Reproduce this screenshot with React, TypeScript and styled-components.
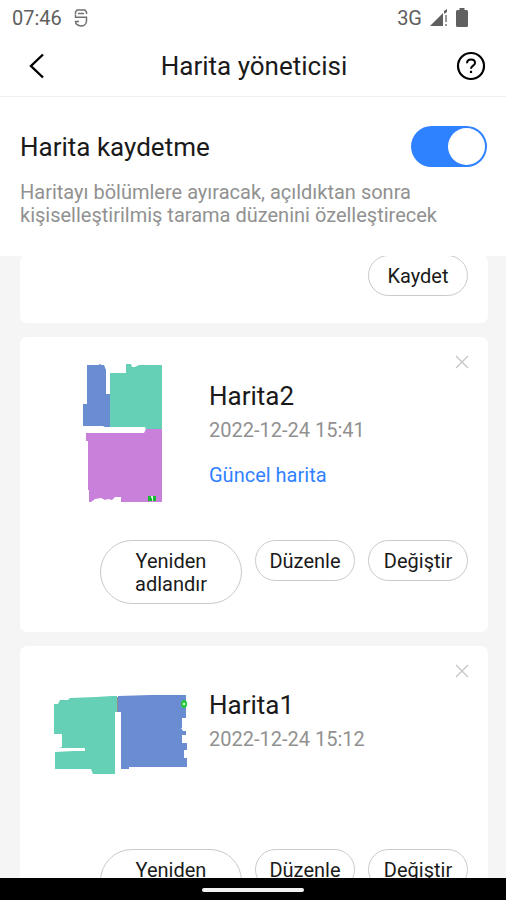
import React, { useState } from "react";
import styled, { createGlobalStyle } from "styled-components";

const GlobalStyle = createGlobalStyle`
  * { box-sizing: border-box; }
  body { margin: 0; background: #fff; }
  body, button, input { font-family: Roboto, "Liberation Sans", sans-serif; }
  button { margin: 0; cursor: pointer; }
  h1, h2, p { margin: 0; font-weight: 400; }
`;

const Screen = styled.div`
  display: flex;
  flex-direction: column;
  height: 100vh;
  overflow: hidden;
  background: #f5f5f5;
  color: #1a1a1a;
`;

const StatusBar = styled.div`
  display: flex;
  align-items: center;
  justify-content: space-between;
  height: 35px;
  padding: 0 38px 0 12px;
  background: #fff;
  color: #606060;
  font-size: 20px;
`;

const StatusGroup = styled.div<{ $gap: number }>`
  display: flex;
  align-items: center;
  gap: ${(p) => p.$gap}px;
`;

const NavBar = styled.header`
  display: grid;
  grid-template-columns: 44px 1fr 44px;
  align-items: center;
  height: 62px;
  padding: 0 13px 0 15px;
  background: #fff;
  border-bottom: 1px solid #f0f0f0;
`;

const NavTitle = styled.h1`
  text-align: center;
  font-size: 26px;
  line-height: 32px;
`;

const IconButton = styled.button`
  display: flex;
  align-items: center;
  justify-content: center;
  height: 44px;
  padding: 0;
  border: 0;
  background: none;
  color: #000;
`;

const SavePanel = styled.section`
  padding: 29px 19px 29px 20px;
  background: #fff;
`;

const SaveRow = styled.div`
  display: flex;
  align-items: center;
  justify-content: space-between;
  height: 41px;
`;

const SaveLabel = styled.label`
  font-size: 26px;
  line-height: 32px;
`;

const Toggle = styled.input`
  appearance: none;
  display: flex;
  align-items: center;
  width: 76px;
  height: 41px;
  margin: 0;
  padding: 2px;
  border-radius: 21px;
  background: #c8c8c8;
  cursor: pointer;
  &::before {
    content: "";
    width: 37px;
    height: 37px;
    border-radius: 50%;
    background: #fff;
  }
  &:checked {
    justify-content: flex-end;
    background: #2f82ff;
  }
`;

const Description = styled.p`
  margin-top: 14px;
  color: #919191;
  font-size: 20px;
  line-height: 23px;
`;

const MapList = styled.main`
  display: flex;
  flex-direction: column;
  flex: 1;
  gap: 14px;
  min-height: 0;
  padding: 0 18px 0 20px;
  overflow: hidden;
`;

const Card = styled.article<{ $scrolled?: boolean }>`
  position: relative;
  flex: none;
  margin-top: ${(p) => (p.$scrolled ? "-1px" : "0")};
  padding: ${(p) => (p.$scrolled ? "0 20px 27px" : "26px 20px 28px")};
  border-radius: 7px;
  background: #fff;
`;

const CloseButton = styled.button`
  position: absolute;
  top: 10px;
  right: 11px;
  display: flex;
  align-items: center;
  justify-content: center;
  width: 30px;
  height: 30px;
  padding: 0;
  border: 0;
  background: none;
  color: #c6c6c6;
`;

const CardBody = styled.div`
  display: flex;
  gap: 20px;
  padding-left: 13px;
`;

const Info = styled.div`
  padding-top: 17px;
`;

const MapName = styled.h2`
  font-size: 26px;
  line-height: 32px;
`;

const MapDate = styled.p`
  margin-top: 6px;
  color: #919191;
  font-size: 20px;
  line-height: 24px;
`;

const CurrentMap = styled.p`
  margin-top: 21px;
  color: #2f82ff;
  font-size: 20px;
  line-height: 24px;
`;

const Actions = styled.div<{ $flush?: boolean }>`
  display: flex;
  align-items: flex-start;
  justify-content: flex-end;
  gap: 13px;
  margin-top: ${(p) => (p.$flush ? "0" : "37px")};
`;

const PillButton = styled.button<{ $wide?: boolean }>`
  width: ${(p) => (p.$wide ? "142px" : "100px")};
  padding: ${(p) => (p.$wide ? "9px 28px 7px" : "9px 0 7px")};
  border: 1px solid #cacaca;
  border-radius: 32px;
  background: #fff;
  color: #1a1a1a;
  font-size: 20px;
  line-height: 23px;
`;

const HomeBar = styled.footer`
  display: flex;
  align-items: center;
  justify-content: center;
  flex: none;
  height: 22px;
  padding-top: 2px;
  background: #000;
`;

const HomeHandle = styled.div`
  width: 102px;
  height: 4px;
  border-radius: 2px;
  background: #f2f2f2;
`;

const BLUE = "#6a8cd0";
const GREEN = "#65d0b5";
const PURPLE = "#c980da";

const MapTwo = () => (
  <svg width="136" height="140" viewBox="53 363 136 140" aria-hidden="true">
    <path fill={BLUE} d="M87 365H99L100 363.500L101 365H104L106 370V394H110V427H105L103 426H83V404H87Z" />
    <path fill={GREEN} d="M110 373H126V364H131L132 367H135L139 365H162V430H146L145 427H110Z" />
    <path fill={PURPLE} d="M146 429H162V502H121V497H115L112 500L108 499L105 500L101 498L95 499L91 502H89V490H88V441H86V433H144Z" />
    <path fill="#15b830" d="M148 496H156V501H148Z" />
    <path fill="#d8ffd8" d="M151 496H153V501H152V498H151Z" />
  </svg>
);

const MapOne = () => (
  <svg width="136" height="140" viewBox="53 672 136 140" aria-hidden="true">
    <path fill={GREEN} d="M54 704H58L60 700H68L70 698L96 697L112 696H117V712H115V774H93L91 769H55V752L74 751H85V748H59L62 747V734H54Z" />
    <path fill={BLUE} d="M118 696L151 695H186V718H182V728H181L183 731H186V735H182V743H187V750H184V758H187V767H129V769H121V712H118Z" />
    <path stroke="#958d8d" strokeWidth="1" d="M117.500 697V712" />
    <ellipse cx="184" cy="704" rx="3" ry="4" fill="#22c938" />
    <circle cx="184" cy="704" r="1.200" fill="#d8ffd8" />
  </svg>
);

interface MapCardProps {
  name: string;
  date: string;
  current?: boolean;
  children: React.ReactNode;
}

const MapCard = ({ name, date, current, children }: MapCardProps) => (
  <Card>
    <CloseButton type="button" aria-label={`${name} sil`}>
      <svg width="14" height="14" viewBox="0 0 14 14" fill="none" stroke="currentColor" strokeWidth="1.400">
        <path d="M1 1L13 13M13 1L1 13" />
      </svg>
    </CloseButton>
    <CardBody>
      {children}
      <Info>
        <MapName>{name}</MapName>
        <MapDate>{date}</MapDate>
        {current && <CurrentMap>Güncel harita</CurrentMap>}
      </Info>
    </CardBody>
    <Actions>
      <PillButton type="button" $wide>Yeniden adlandır</PillButton>
      <PillButton type="button">Düzenle</PillButton>
      <PillButton type="button">Değiştir</PillButton>
    </Actions>
  </Card>
);

export default function App() {
  const [saving, setSaving] = useState(true);
  return (
    <Screen>
      <GlobalStyle />
      <StatusBar>
        <StatusGroup $gap={12}>
          <span>07:46</span>
          <svg width="14" height="18" viewBox="0 0 14 18" fill="none" stroke="#707070" strokeWidth="1.500" aria-hidden="true">
            <path d="M1.500 5V3L3 1H11L12.500 3V5M4 4.500H10M1.500 5.500V8.300H12.500V12C12.500 15 10 17 7 17C4 17 1.500 15 1.500 12.500H5" />
          </svg>
        </StatusGroup>
        <StatusGroup $gap={8}>
          <span>3G</span>
          <svg width="18" height="17" viewBox="0 0 18 17" fill="#606060" aria-hidden="true">
            <path d="M0 17L13 4V17Z" />
            <path d="M14 2L17 0V3L14 5Z" />
            <path fill="#999" d="M15 6H17V13H15ZM15 15H17V17H15Z" />
          </svg>
          <svg width="12" height="19" viewBox="0 0 12 19" fill="#606060" aria-hidden="true">
            <path d="M3.500 0H8.500V2H10.500Q12 2 12 3.500V17.500Q12 19 10.500 19H1.500Q0 19 0 17.500V3.500Q0 2 1.500 2H3.500Z" />
          </svg>
        </StatusGroup>
      </StatusBar>
      <NavBar>
        <IconButton type="button" aria-label="Geri">
          <svg width="16" height="26" viewBox="0 0 16 26" fill="none" stroke="currentColor" strokeWidth="2.400">
            <path d="M14 1.500L2 13L14 24.500" />
          </svg>
        </IconButton>
        <NavTitle>Harita yöneticisi</NavTitle>
        <IconButton type="button" aria-label="Yardım">
          <svg width="30" height="30" viewBox="0 0 30 30" fill="none" stroke="currentColor">
            <circle cx="15" cy="15" r="13" strokeWidth="2.200" />
            <path strokeWidth="2" d="M11 12.200C11 9.700 12.600 8.500 15 8.500C17.400 8.500 19 9.900 19 11.900C19 14.600 15 14.700 15 17.800" />
            <path strokeWidth="2.200" d="M15 19.800V22" />
          </svg>
        </IconButton>
      </NavBar>
      <SavePanel>
        <SaveRow>
          <SaveLabel htmlFor="save-map">Harita kaydetme</SaveLabel>
          <Toggle
            id="save-map"
            type="checkbox"
            role="switch"
            checked={saving}
            onChange={(e) => setSaving(e.target.checked)}
          />
        </SaveRow>
        <Description>
          Haritayı bölümlere ayıracak, açıldıktan sonra kişiselleştirilmiş tarama düzenini özelleştirecek
        </Description>
      </SavePanel>
      <MapList>
        <Card $scrolled>
          <Actions $flush>
            <PillButton type="button">Kaydet</PillButton>
          </Actions>
        </Card>
        <MapCard name="Harita2" date="2022-12-24 15:41" current>
          <MapTwo />
        </MapCard>
        <MapCard name="Harita1" date="2022-12-24 15:12">
          <MapOne />
        </MapCard>
      </MapList>
      <HomeBar>
        <HomeHandle />
      </HomeBar>
    </Screen>
  );
}
